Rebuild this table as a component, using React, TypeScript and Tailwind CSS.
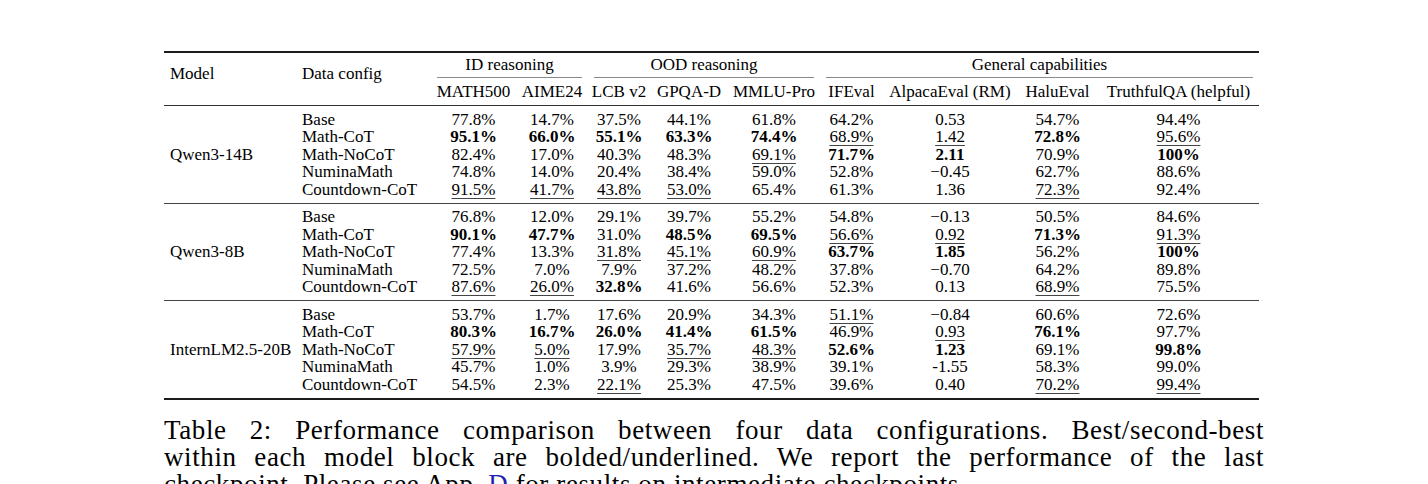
import React from "react";

type Block = { model: string; rows: [string, string[]][] };

const blocks: Block[] = [
  {
    model: "Qwen3-14B",
    rows: [
      ["Base", ["77.8%", "14.7%", "37.5%", "44.1%", "61.8%", "64.2%", "0.53", "54.7%", "94.4%"]],
      ["Math-CoT", ["*95.1%", "*66.0%", "*55.1%", "*63.3%", "*74.4%", "_68.9%", "_1.42", "*72.8%", "_95.6%"]],
      ["Math-NoCoT", ["82.4%", "17.0%", "40.3%", "48.3%", "_69.1%", "*71.7%", "*2.11", "70.9%", "*100%"]],
      ["NuminaMath", ["74.8%", "14.0%", "20.4%", "38.4%", "59.0%", "52.8%", "\u22120.45", "62.7%", "88.6%"]],
      ["Countdown-CoT", ["_91.5%", "_41.7%", "_43.8%", "_53.0%", "65.4%", "61.3%", "1.36", "_72.3%", "92.4%"]],
    ],
  },
  {
    model: "Qwen3-8B",
    rows: [
      ["Base", ["76.8%", "12.0%", "29.1%", "39.7%", "55.2%", "54.8%", "\u22120.13", "50.5%", "84.6%"]],
      ["Math-CoT", ["*90.1%", "*47.7%", "31.0%", "*48.5%", "*69.5%", "_56.6%", "_0.92", "*71.3%", "_91.3%"]],
      ["Math-NoCoT", ["77.4%", "13.3%", "_31.8%", "_45.1%", "_60.9%", "*63.7%", "*1.85", "56.2%", "*100%"]],
      ["NuminaMath", ["72.5%", "7.0%", "7.9%", "37.2%", "48.2%", "37.8%", "\u22120.70", "64.2%", "89.8%"]],
      ["Countdown-CoT", ["_87.6%", "_26.0%", "*32.8%", "41.6%", "56.6%", "52.3%", "0.13", "_68.9%", "75.5%"]],
    ],
  },
  {
    model: "InternLM2.5-20B",
    rows: [
      ["Base", ["53.7%", "1.7%", "17.6%", "20.9%", "34.3%", "_51.1%", "\u22120.84", "60.6%", "72.6%"]],
      ["Math-CoT", ["*80.3%", "*16.7%", "*26.0%", "*41.4%", "*61.5%", "46.9%", "_0.93", "*76.1%", "97.7%"]],
      ["Math-NoCoT", ["_57.9%", "_5.0%", "17.9%", "_35.7%", "_48.3%", "*52.6%", "*1.23", "69.1%", "*99.8%"]],
      ["NuminaMath", ["45.7%", "1.0%", "3.9%", "29.3%", "38.9%", "39.1%", "-1.55", "58.3%", "99.0%"]],
      ["Countdown-CoT", ["54.5%", "2.3%", "_22.1%", "25.3%", "47.5%", "39.6%", "0.40", "_70.2%", "_99.4%"]],
    ],
  },
];

const cols = ["MATH500", "AIME24", "LCB v2", "GPQA-D", "MMLU-Pro", "IFEval", "AlpacaEval (RM)", "HaluEval", "TruthfulQA (helpful)"];

const GRID =
  "grid grid-cols-[132px_135px_85px_72px_62px_78px_92px_63px_134px_81px_161px]";

function Val({ v }: { v: string }) {
  if (v.startsWith("*")) return <span className="font-bold">{v.slice(1)}</span>;
  if (v.startsWith("_"))
    return (
      <span className="underline decoration-[1px] decoration-[#444] underline-offset-[3px]">{v.slice(1)}</span>
    );
  return <span>{v}</span>;
}

function Group({ label, span }: { label: string; span: string }) {
  return (
    <div className={`${span} flex flex-col`}>
      <div className="h-[24px] leading-[24px] text-center">{label}</div>
      <div className="mx-[6px] h-px bg-[#8a8a8a]" />
    </div>
  );
}

export default function App() {
  return (
    <div className="w-[1428px] h-[484px] overflow-hidden bg-white text-black font-['Liberation_Serif','Times_New_Roman',serif]">
      <div className="pt-[51px] pl-[164px]">
        <div className="w-[1095px] text-[17px]">
          <div className="h-[2px] bg-[#1c1c1c]" />
          {/* header */}
          <div className={`${GRID} grid-rows-[25px_27px]`}>
            <div className="row-span-2 flex items-center px-[6px] pb-[10px]">Model</div>
            <div className="row-span-2 flex items-center px-[6px] pb-[10px]">Data config</div>
            <Group label="ID reasoning" span="col-span-2" />
            <Group label="OOD reasoning" span="col-span-3" />
            <Group label="General capabilities" span="col-span-4" />
            {cols.map((c) => (
              <div key={c} className="flex items-center justify-center whitespace-nowrap">
                {c}
              </div>
            ))}
          </div>
          <div className="h-px bg-[#333]" />
          {blocks.map((b, bi) => (
            <React.Fragment key={b.model}>
              <div className={`${GRID} pt-[4.5px] pb-[4.5px] leading-[17.5px]`}>
                <div className="row-span-5 flex items-center px-[6px] whitespace-nowrap">{b.model}</div>
                {b.rows.map(([cfg, vals]) => (
                  <React.Fragment key={cfg}>
                    <div className="col-start-2 px-[6px] h-[17.5px] whitespace-nowrap">{cfg}</div>
                    {vals.map((v, i) => (
                      <div key={i} className="text-center h-[17.5px] whitespace-nowrap">
                        <Val v={v} />
                      </div>
                    ))}
                  </React.Fragment>
                ))}
              </div>
              {bi < blocks.length - 1 ? (
                <div className="h-px bg-[#444]" />
              ) : (
                <div className="h-[2px] bg-[#1c1c1c]" />
              )}
            </React.Fragment>
          ))}
        </div>
        {/* caption */}
        <div className="w-[1100px] mt-[17px] text-[27px] leading-[27px] tracking-[0.6px]">
          <div className="text-justify [text-align-last:justify] whitespace-nowrap">
            Table 2: Performance comparison between four data configurations. Best/second-best
          </div>
          <div className="text-justify [text-align-last:justify] whitespace-nowrap">
            within each model block are bolded/underlined. We report the performance of the last
          </div>
          <div className="whitespace-nowrap">
            checkpoint. Please see App. <span className="text-[#1f1fb0]">D</span> for results on intermediate checkpoints.
          </div>
        </div>
      </div>
    </div>
  );
}
